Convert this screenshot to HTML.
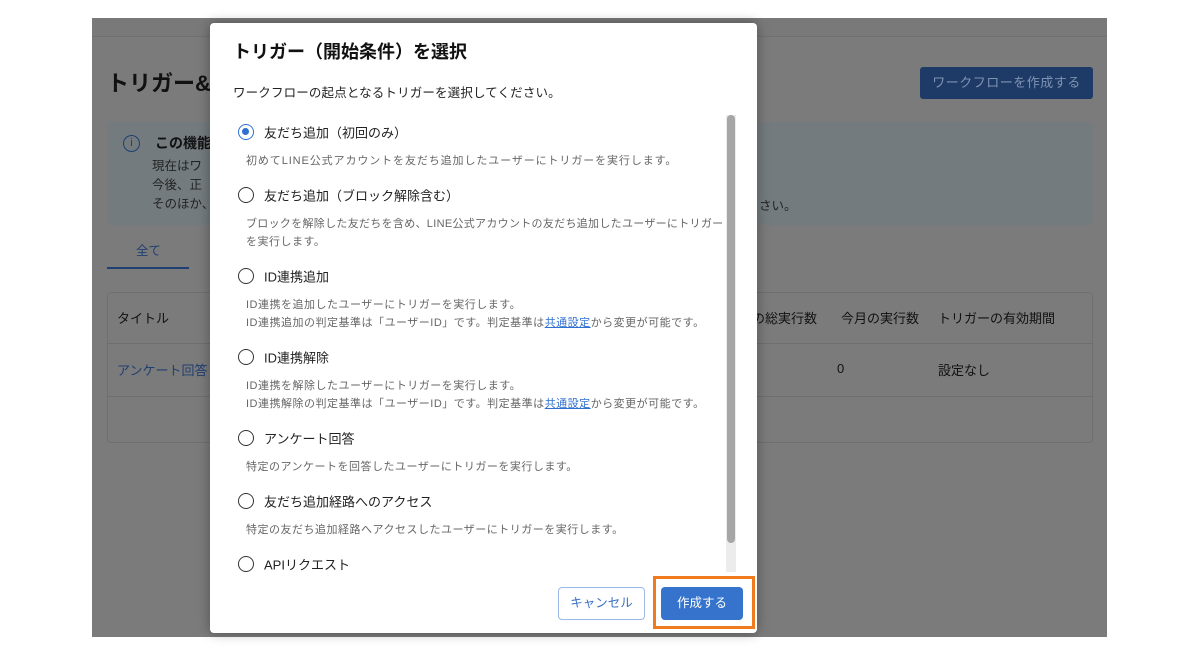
<!DOCTYPE html>
<html><head><meta charset="utf-8"><style>
*{margin:0;padding:0;box-sizing:border-box}
body{width:1200px;height:655px;background:#fff;position:relative;overflow:hidden;font-family:"Liberation Sans","Noto Sans CJK JP",sans-serif}
.a{position:absolute;white-space:nowrap}
#bg{position:absolute;left:92px;top:18px;width:1015px;height:619px;background:#7b7b7b}
.radio{position:absolute;left:238px;width:16px;height:16px;border:1.6px solid #333;border-radius:50%}
.lbl{position:absolute;left:264px;font-size:13px;color:#222;white-space:nowrap;transform:translateY(-50%)}
.d{position:absolute;left:246px;font-size:11px;color:#666;white-space:nowrap;letter-spacing:.5px;transform:translateY(-50%)}
.d a{color:#2f6fd0;text-decoration:underline}
</style></head><body>
<div id="bg">
  <div class="a" style="left:0;top:0;width:1015px;height:19px;border-bottom:1px solid #707070;background:#797979"></div>
  <div class="a" style="left:15px;top:48px;font-size:22px;font-weight:bold;color:#111">トリガー&amp;</div>
  <div class="a" style="left:828px;top:49px;width:173px;height:32px;background:#1e3a66;border-radius:3px;color:#7f93b3;font-size:13px;text-align:center;line-height:32px;letter-spacing:.5px">ワークフローを作成する</div>
  <div class="a" style="left:15px;top:104px;width:986px;height:103px;background:#737b7f;border-radius:3px"></div>
  <div class="a" style="left:31px;top:117px;width:17px;height:17px;border:1.5px solid #1f3f72;border-radius:50%;color:#1f3f72;font-size:11px;text-align:center;line-height:14px">i</div>
  <div class="a" style="left:63px;top:115px;font-size:14px;font-weight:bold;color:#111">この機能</div>
  <div class="a" style="left:60px;top:139px;font-size:12.5px;color:#222;line-height:19px">現在はワ<br>今後、正<br>そのほか、</div>
  <div class="a" style="left:667px;top:177px;font-size:12.5px;color:#222">さい。</div>
  <div class="a" style="left:44px;top:222px;font-size:12.5px;color:#1f3f72">全て</div>
  <div class="a" style="left:15px;top:249px;width:82px;height:2px;background:#1f3f72"></div>
  <div class="a" style="left:15px;top:274px;width:986px;height:151px;border:1px solid #6f6f6f;border-radius:4px"></div>
  <div class="a" style="left:15px;top:325px;width:986px;height:1px;background:#6f6f6f"></div>
  <div class="a" style="left:15px;top:378px;width:986px;height:1px;background:#6f6f6f"></div>
  <div class="a" style="left:25px;top:290px;font-size:13px;color:#111">タイトル</div>
  <div class="a" style="left:25px;top:342px;font-size:13px;color:#1f3f72">アンケート回答</div>
  <div class="a" style="left:660px;top:290px;font-size:13px;color:#111">の総実行数</div>
  <div class="a" style="left:749px;top:290px;font-size:13px;color:#111">今月の実行数</div>
  <div class="a" style="left:846px;top:290px;font-size:13px;color:#111">トリガーの有効期間</div>
  <div class="a" style="left:745px;top:343px;font-size:13px;color:#111">0</div>
  <div class="a" style="left:846px;top:342px;font-size:13px;color:#111">設定なし</div>
</div>
<div class="a" style="left:210px;top:23px;width:547px;height:610px;background:#fff;border-radius:4px;box-shadow:0 0 12px rgba(0,0,0,.35)"></div>
<div class="a" style="left:233px;top:38px;font-size:18px;font-weight:bold;color:#111">トリガー（開始条件）を選択</div>
<div class="a" style="left:233px;top:82px;font-size:12.5px;color:#222;letter-spacing:.15px">ワークフローの起点となるトリガーを選択してください。</div>
<div class="a" style="left:726px;top:115px;width:10px;height:457px;background:#ececec"></div>
<div class="a" style="left:727px;top:115px;width:8px;height:428px;background:#a6a6a6;border-radius:4px"></div>

<div class="radio" style="top:124px;border-color:#2f6fd0"><div style="position:absolute;left:3px;top:3px;width:7px;height:7px;border-radius:50%;background:#2f6fd0"></div></div>
<div class="lbl" style="top:132px">友だち追加（初回のみ）</div>
<div class="d" style="top:160px;letter-spacing:.9px">初めてLINE公式アカウントを友だち追加したユーザーにトリガーを実行します。</div>

<div class="radio" style="top:187px"></div>
<div class="lbl" style="top:195px">友だち追加（ブロック解除含む）</div>
<div class="d" style="top:223px;letter-spacing:.3px">ブロックを解除した友だちを含め、LINE公式アカウントの友だち追加したユーザーにトリガー</div>
<div class="d" style="top:241px">を実行します。</div>

<div class="radio" style="top:268px"></div>
<div class="lbl" style="top:276px">ID連携追加</div>
<div class="d" style="top:304px">ID連携を追加したユーザーにトリガーを実行します。</div>
<div class="d" style="top:322px">ID連携追加の判定基準は「ユーザーID」です。判定基準は<a>共通設定</a>から変更が可能です。</div>

<div class="radio" style="top:349px"></div>
<div class="lbl" style="top:357px">ID連携解除</div>
<div class="d" style="top:385px">ID連携を解除したユーザーにトリガーを実行します。</div>
<div class="d" style="top:403px">ID連携解除の判定基準は「ユーザーID」です。判定基準は<a>共通設定</a>から変更が可能です。</div>

<div class="radio" style="top:430px"></div>
<div class="lbl" style="top:438px">アンケート回答</div>
<div class="d" style="top:466px">特定のアンケートを回答したユーザーにトリガーを実行します。</div>

<div class="radio" style="top:493px"></div>
<div class="lbl" style="top:501px">友だち追加経路へのアクセス</div>
<div class="d" style="top:529px">特定の友だち追加経路へアクセスしたユーザーにトリガーを実行します。</div>

<div class="radio" style="top:556px"></div>
<div class="lbl" style="top:564px">APIリクエスト</div>

<div class="a" style="left:558px;top:587px;width:87px;height:33px;border:1px solid #9bb8e6;border-radius:4px;color:#3a6fc4;font-size:12.5px;text-align:center;line-height:31px">キャンセル</div>
<div class="a" style="left:653px;top:576px;width:102px;height:53px;border:3px solid #f07a1e"></div>
<div class="a" style="left:661px;top:587px;width:82px;height:33px;background:#3573cc;border-radius:4px;color:#fff;font-size:12.5px;text-align:center;line-height:33px">作成する</div>
</body></html>
